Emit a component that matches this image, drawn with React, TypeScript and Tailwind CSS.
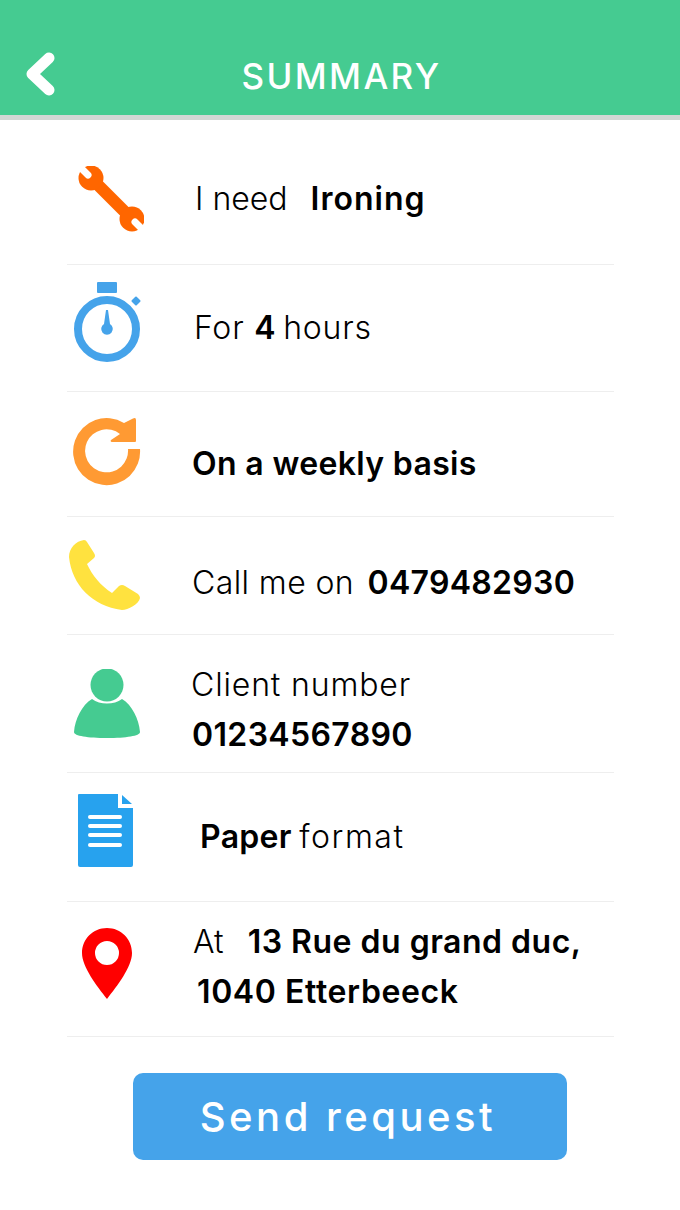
import React from 'react';

const sans = "font-['Inter',sans-serif]";

const Wrench = () => (
  <svg width="66" height="66" viewBox="78 166 66 66" className="ml-[11px] mt-[46px]">
    <path d="M91 178 132 219" stroke="#ff6600" strokeWidth="12" />
    <circle cx="91" cy="178" r="12.500" fill="#ff6600" />
    <circle cx="132" cy="219" r="12.500" fill="#ff6600" />
    <path d="M88 175 78 165M135 222l10 10" stroke="#ffffff" strokeWidth="7" strokeLinecap="round" />
  </svg>
);

const Stopwatch = () => (
  <svg width="68" height="82" viewBox="73 281 68 82" className="ml-[6px] mt-[16px]">
    <rect x="97" y="282" width="20" height="11" rx="1" fill="#45a3ea" />
    <rect x="132.500" y="297.500" width="7" height="7" rx="1" transform="rotate(45 136 301)" fill="#45a3ea" />
    <circle cx="107" cy="329" r="29" fill="none" stroke="#45a3ea" strokeWidth="8" />
    <path d="M106 310h2l2 14a5.800 5.800 0 1 1-6 0z" fill="#45a3ea" />
  </svg>
);

const Repeat = () => (
  <svg width="70" height="70" viewBox="71 417 70 70" className="ml-[4px] mt-[25px]">
    <path d="M140 449A33.500 33.500 0 1 1 124 423L133 418.500Q136 417 136 420V441Q136 442 135 442H112Q110 442 111 440L120 434A21.500 21.500 0 1 0 128 449Z" fill="#ff9a33" />
  </svg>
);

const Phone = () => (
  <svg width="72" height="72" viewBox="69 539 72 72" className="ml-[2px] mt-[22px]">
    <path d="M69 557C69 548 76 541 84 540Q86 540 87 542L94 553Q96 556 94 558L87 564C92 575 101 586 112 593L119 586Q122 584 125 586L138 594Q140 596 140 598C139 604 128 610 122 610C92 606 72 585 69 557Z" fill="#ffe23f" />
  </svg>
);

const User = () => (
  <svg width="66" height="70" viewBox="74 669 66 70" className="ml-[7px] mt-[34px]">
    <circle cx="107" cy="685" r="16.500" fill="#45cb91" />
    <path d="M92 699c8 6 22 6 30 0 10 6 17 20 18 33 0 4-14 6-33 6s-33-2-33-6c1-13 8-27 18-33z" fill="#45cb91" />
  </svg>
);

const Doc = () => (
  <svg width="56" height="74" viewBox="78 794 56 74" className="ml-[11px] mt-[21px]">
    <path d="M79 794h39v14h15v57a2 2 0 0 1-2 2H80a2 2 0 0 1-2-2v-70a1 1 0 0 1 1-1z" fill="#27a2ee" />
    <path d="M122 795l10 9h-10z" fill="#27a2ee" />
    <g fill="#ffffff">
      <rect x="88" y="815" width="34" height="4" rx="2" />
      <rect x="88" y="824" width="34" height="4" rx="2" />
      <rect x="88" y="833" width="34" height="4" rx="2" />
      <rect x="88" y="843" width="34" height="4" rx="2" />
    </g>
  </svg>
);

const Pin = () => (
  <svg width="50" height="72" viewBox="82 928 50 72" className="ml-[15px] mt-[26px]">
    <path fillRule="evenodd" d="M107 928c14 0 25 11 25 25 0 14-15 33-25 46-10-13-25-32-25-46 0-14 11-25 25-25zm0 13a12 12 0 1 0 0 24 12 12 0 0 0 0-24z" fill="#ff0000" />
  </svg>
);

export default function App() {
  return (
    <div className={`${sans} w-[680px] h-[1210px] bg-white text-black font-light text-[32px] leading-[50px]`}>
      <header className="h-[120px] bg-[#45cb91] border-b-[5px] border-[#d3d7d5] flex items-center justify-center relative">
        <svg width="32" height="44" viewBox="0 0 32 44" className="absolute left-[24px] top-[52px]">
          <path d="M25 6 8 22l17 16" fill="none" stroke="#ffffff" strokeWidth="11" strokeLinecap="round" strokeLinejoin="round" />
        </svg>
        <h1 className="text-white text-[35px] font-medium tracking-[2.400px] mt-[36px] ml-[3px]">SUMMARY</h1>
      </header>

      <main className="mx-[67px] w-[547px]">
        <div className="h-[145px] border-b border-[#eeeeee] flex">
          <div className="w-[125px] shrink-0"><Wrench /></div>
          <p className="pt-[54px] ml-[3px]">I need <span className="font-semibold tracking-[1px] ml-[14px]">Ironing</span></p>
        </div>
        <div className="h-[127px] border-b border-[#eeeeee] flex">
          <div className="w-[125px] shrink-0"><Stopwatch /></div>
          <p className="pt-[38px] ml-[2px] tracking-[0.800px]">For <span className="font-semibold">4</span> <span className="ml-[-3px]">hours</span></p>
        </div>
        <div className="h-[125px] border-b border-[#eeeeee] flex">
          <div className="w-[125px] shrink-0"><Repeat /></div>
          <p className="pt-[47px] font-semibold tracking-[0.350px]">On a weekly basis</p>
        </div>
        <div className="h-[118px] border-b border-[#eeeeee] flex">
          <div className="w-[125px] shrink-0"><Phone /></div>
          <p className="pt-[41px] tracking-[0.400px]">Call me on <span className="font-semibold tracking-[0.300px] ml-[4px]">0479482930</span></p>
        </div>
        <div className="h-[138px] border-b border-[#eeeeee] flex">
          <div className="w-[125px] shrink-0"><User /></div>
          <div className="pt-[25px]">
            <p className="tracking-[0.850px] ml-[-1px]">Client number</p>
            <p className="font-semibold tracking-[0.350px]">01234567890</p>
          </div>
        </div>
        <div className="h-[129px] border-b border-[#eeeeee] flex">
          <div className="w-[125px] shrink-0"><Doc /></div>
          <p className="pt-[39px] ml-[8px] tracking-[1.500px]"><span className="font-semibold tracking-[0.300px]">Paper</span> <span className="ml-[-3px]">format</span></p>
        </div>
        <div className="h-[135px] border-b border-[#eeeeee] flex">
          <div className="w-[125px] shrink-0"><Pin /></div>
          <div className="pt-[15px] ml-[1px]">
            <p>At <span className="font-semibold tracking-[0.500px] ml-[15px]">13 Rue du grand duc,</span></p>
            <p className="font-semibold tracking-[0.600px] ml-[4px]">1040 Etterbeeck</p>
          </div>
        </div>
      </main>

      <div className="mt-[36px] ml-[133px]">
        <button className="w-[434px] h-[87px] pr-[4px] rounded-[10px] bg-[#45a3ea] text-white text-[40px] font-medium tracking-[3.500px]">
          Send request
        </button>
      </div>
    </div>
  );
}
